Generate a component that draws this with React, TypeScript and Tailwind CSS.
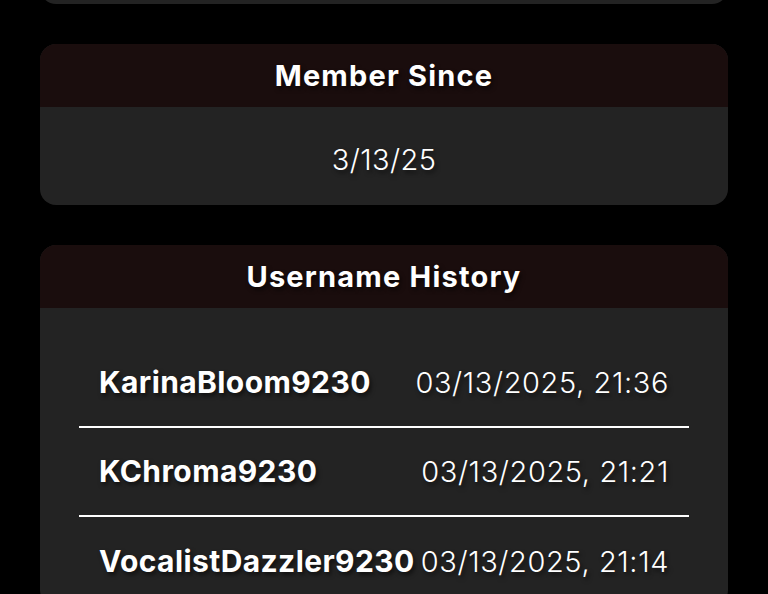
const history = [
  { name: "KarinaBloom9230", date: "03/13/2025, 21:36" },
  { name: "KChroma9230", date: "03/13/2025, 21:21" },
  { name: "VocalistDazzler9230", date: "03/13/2025, 21:14" },
];

const shadow = "[text-shadow:2px_3px_4px_rgba(0,0,0,0.55)]";

function Card({ title, children }: { title: string; children: React.ReactNode }) {
  return (
    <div className="mt-10 overflow-hidden rounded-2xl bg-[#232323]">
      <div className="flex h-[63px] items-center justify-center bg-[#1a0d0d]">
        <h2 className={`text-[29px] font-bold tracking-[1.2px] text-white ${shadow}`}>{title}</h2>
      </div>
      {children}
    </div>
  );
}

export default function App() {
  return (
    <div className="min-h-screen overflow-hidden bg-black px-10 font-['Inter',sans-serif] text-white">
      <div className="-mt-[56px] h-[60px] rounded-2xl bg-[#232323]" />

      <Card title="Member Since">
        <div className={`flex h-[98px] items-center justify-center pt-2 text-[29px] font-light tracking-[0.4px] ${shadow}`}>
          3/13/25
        </div>
      </Card>

      <Card title="Username History">
        <div className="px-[39px] pt-[31px]">
          {history.map((h, i) => (
            <div
              key={h.name}
              className={`flex h-[89px] items-center justify-between px-5 ${
                i < history.length - 1 ? "border-b-2 border-white" : ""
              }`}
            >
              <span className={`text-[30px] font-bold tracking-[0.4px] ${shadow}`}>{h.name}</span>
              <span className={`text-[29px] font-light tracking-[0.6px] ${shadow}`}>{h.date}</span>
            </div>
          ))}
        </div>
      </Card>
    </div>
  );
}
